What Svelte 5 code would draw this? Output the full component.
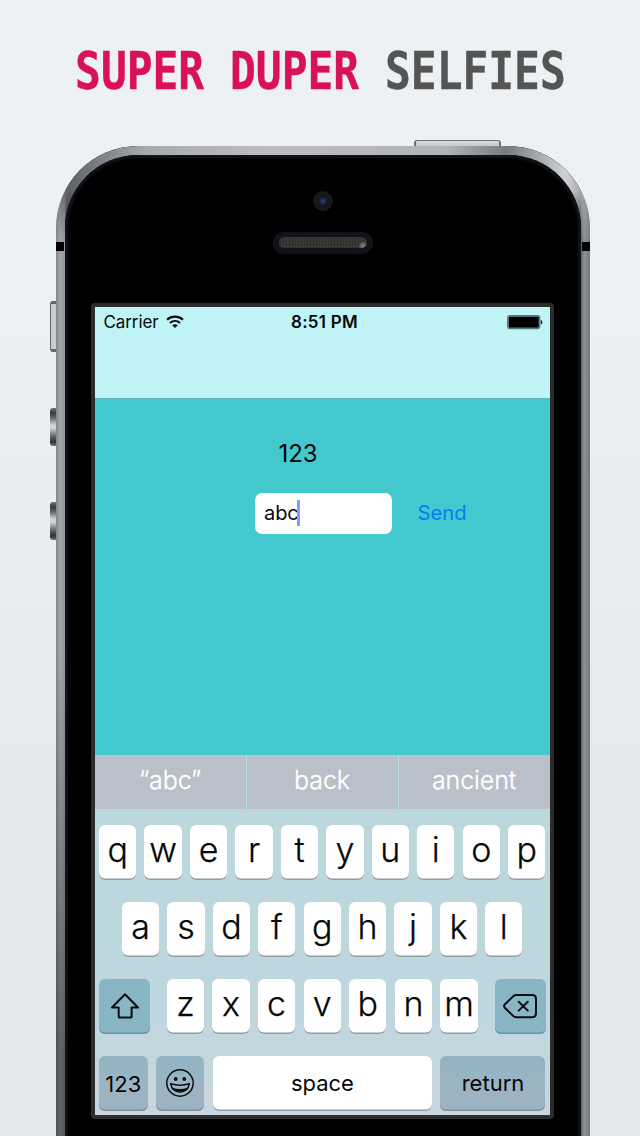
<script>
  const top = 'qwertyuiop'.split('');
  const home = 'asdfghjkl'.split('');
  const bottom = 'zxcvbnm'.split('');
  const suggestions = ['“abc”', 'back', 'ancient'];
</script>

<main class="page">
  <h1><span class="title"><span class="accent">SUPER DUPER</span> SELFIES</span></h1>

  <div class="phone">
    <i class="power"></i>
    <i class="side mute"></i>
    <i class="side volume up"></i>
    <i class="side volume down"></i>
    <i class="band left"></i>
    <i class="band right"></i>

    <div class="face">
      <div class="camera"><i></i></div>
      <div class="speaker"><i></i></div>

      <div class="screen">
        <header>
          <div class="status">
            <span class="carrier">
              <span class="carrier-name">Carrier</span>
              <svg width="18" height="14" viewBox="0 0 18 14" fill="none" stroke="#061012" stroke-width="2.1">
                <path d="M1 4.7C5.7.6 12.3.6 17 4.7" />
                <path d="M3.9 8C6.9 5.3 11.1 5.3 14.1 8" />
                <path d="M6.2 10.3C7.8 8.9 10.2 8.9 11.8 10.3L9 13.1Z" fill="#061012" stroke="none" />
              </svg>
            </span>
            <strong>8:51 PM</strong>
            <svg class="battery" width="36" height="15" viewBox="0 0 36 15">
              <rect x=".7" y=".7" width="32" height="13" rx="2.4" fill="#c0f3f6" stroke="#53777a" stroke-width="1.3" />
              <rect x="1.6" y="1.6" width="30.2" height="11.2" rx="1.2" />
              <path d="M33.8 4.7q1.5.8 1.5 2.5t-1.5 2.5z" fill="#102325" />
            </svg>
          </div>
        </header>

        <section class="content">
          <div class="message"><span>123</span></div>
          <div class="compose">
            <div class="field"><span>abc</span><i></i></div>
            <span class="send"><span>Send</span></span>
          </div>
        </section>

        <div class="suggestions">
          {#each suggestions as word}
            <div><span>{word}</span></div>
          {/each}
        </div>

        <div class="keyboard">
          <div class="row">
            {#each top as letter}<div class="key">{letter}</div>{/each}
          </div>
          <div class="row home">
            {#each home as letter}<div class="key">{letter}</div>{/each}
          </div>
          <div class="row spread">
            <div class="key control">
              <svg width="30" height="28" viewBox="0 0 30 28" fill="none" stroke="#090e10" stroke-width="2" stroke-linejoin="round">
                <path d="M15 2.2 28 15.5H21.6V24.7Q21.6 25.6 20.7 25.6H9.6Q8.7 25.6 8.7 24.7V15.5H2Z" />
              </svg>
            </div>
            <div class="letters">
              {#each bottom as letter}<div class="key">{letter}</div>{/each}
            </div>
            <div class="key control">
              <svg width="36" height="28" viewBox="0 0 36 28" fill="none" stroke="#090e10" stroke-width="2" stroke-linejoin="round" stroke-linecap="round">
                <path d="M14 3H30Q34 3 34 7V21.2Q34 25.2 30 25.2H14Q12.5 25.2 11.4 24.1L2.8 15.7Q1.4 14.1 2.8 12.5L11.4 4.1Q12.5 3 14 3Z" />
                <path d="m16.7 9.7 9.1 8.9m0-8.9-9.1 8.9" />
              </svg>
            </div>
          </div>
          <div class="row functions">
            <div class="key dim num"><span>123</span></div>
            <div class="key dim">
              <svg width="30" height="30" viewBox="0 0 30 30" fill="none" stroke="#090e10" stroke-width="1.5">
                <circle cx="15" cy="15" r="13.2" />
                <circle cx="10.7" cy="11" r="1.9" fill="#090e10" stroke="none" />
                <circle cx="19.3" cy="11" r="1.9" fill="#090e10" stroke="none" />
                <path d="M5.8 15.7Q15 18.6 24.2 15.7 23.2 23.9 15 23.9 6.8 23.9 5.8 15.7Z" />
                <path d="M7.4 19.7Q15 22.3 22.6 19.7 20.2 23.9 15 23.9 9.8 23.9 7.4 19.7Z" fill="#090e10" stroke="none" />
              </svg>
            </div>
            <div class="key space"><span>space</span></div>
            <div class="key dim return"><span>return</span></div>
          </div>
        </div>
      </div>
    </div>
  </div>
</main>

<style>
  :global(body) { margin: 0; background: #e8edf0; }
  * { box-sizing: border-box; }
  i { display: block; }
  svg { display: block; flex: none; }
  .page {
    width: 640px;
    height: 1136px;
    overflow: hidden;
    background: linear-gradient(#edf1f4, #ebf0f2 30%, #e4eaee 65%, #e3e9ed);
    font-family: Inter, "Liberation Sans", sans-serif;
    color: #050808;
  }
  h1 {
    display: flex;
    justify-content: center;
    align-items: center;
    height: 146px;
    padding-bottom: 5px;
    margin: 0;
    font: bold 52px/60px "DejaVu Sans Mono", monospace;
    color: #545454;
    white-space: pre;
    -webkit-text-stroke: .4px;
  }
  .title { flex: none; transform: scaleX(.825); }
  .accent { color: #d81159; }
  .phone {
    position: relative;
    width: 534px;
    height: 1100px;
    margin-left: 56px;
    padding: 9px 9px 0;
    border-radius: 82px 82px 0 0;
    background:
      linear-gradient(#0000 500px, #0006 900px) 0 0 / 9px 100% no-repeat,
      linear-gradient(90deg, #85868b 0, #a4a5aa 4px, #96979d 9px, #222 10px, #222 524px, #5b5c62 525px, #919297 528px, #77787d 534px);
  }
  .phone::before {
    content: "";
    position: absolute;
    inset: 0 0 auto;
    height: 96px;
    border-radius: 82px 82px 0 0;
    background: linear-gradient(90deg, #75777c 2px, #606268 14px, #85868b 50px, #a8a9ae 90px, #bdbdc0 210px, #b2b3b6 390px, #7a7b80 450px, #d0d1d4 510px, #909196);
    mask-image: linear-gradient(#000 45px, transparent);
  }
  .face {
    position: relative;
    display: flex;
    flex-direction: column;
    align-items: center;
    height: 100%;
    border-radius: 73px 73px 0 0;
    background: #000;
    box-shadow: inset 0 0 2px 3px #11141c;
  }
  .camera {
    display: grid;
    place-items: center;
    width: 20px;
    height: 20px;
    margin-top: 36px;
    border-radius: 50%;
    background: #17181a;
  }
  .camera i {
    width: 8px;
    height: 8px;
    border-radius: 50%;
    background: radial-gradient(#2a438c, #152041 60%, #101622);
  }
  .speaker {
    width: 100px;
    height: 22px;
    margin-top: 21px;
    padding: 5px 6px;
    border-radius: 11px;
    background: #11131a;
  }
  .speaker i {
    height: 11px;
    border-radius: 6px;
    background:
      radial-gradient(circle at 84px 9px, #77787b 1px, transparent 5px),
      radial-gradient(circle, #202020 .7px, transparent 1px) 0 0 / 3px 3px,
      #383836;
  }
  .power, .side, .band { position: absolute; }
  .power {
    top: -6px;
    left: 358px;
    width: 87px;
    height: 6px;
    border: solid #707175;
    border-width: 1.5px 2.5px 0;
    border-radius: 3px 3px 0 0;
    background: linear-gradient(#dadcde, #c8c9cc);
  }
  .side { left: -6px; width: 6px; }
  .mute {
    top: 155px;
    height: 51px;
    border: solid #66676c;
    border-width: 3px 0 3px 1.5px;
    border-radius: 3px 0 0 3px;
    background: #c9cbd0;
  }
  .volume {
    height: 38px;
    border-radius: 3px 0 0 3px;
    background: linear-gradient(#75767a, #393a40 5px, #66676d 10px, #d4d5d8 17px, #d4d5d8 20px, #66676d 28px, #303138 34px, #75767a);
  }
  .up { top: 262px; }
  .down { top: 356px; }
  .band { top: 96px; width: 8px; height: 9px; background: #000; }
  .left { left: 0; }
  .right { right: 0; }
  .screen {
    display: flex;
    flex-direction: column;
    width: 463px;
    height: 816px;
    margin: 49px 2px 0 0;
    border: 4px solid #2c2c2c;
    border-radius: 4px;
    background: #42c8cd;
  }
  header { height: 92px; border-bottom: 1px solid #5fb8bd; background: #bff3f6; }
  .status {
    display: grid;
    grid-template-columns: 1fr auto 1fr;
    align-items: center;
    height: 30px;
    padding: 0 7px 0 9px;
    font-size: 17px;
  }
  .carrier { display: flex; align-items: center; gap: 8px; }
  .carrier-name { width: 54px; white-space: nowrap; letter-spacing: -.1px; }
  .status strong { font-size: 17px; font-weight: 600; letter-spacing: .25px; margin-left: 3px; }
  .battery { justify-self: end; }
  .content { height: 356px; padding-top: 39px; }
  .message { height: 32px; padding-left: 184px; font-size: 24px; line-height: 32px; letter-spacing: -.1px; }
  .compose { display: flex; align-items: center; margin-top: 23px; padding-left: 160px; }
  .field {
    display: flex;
    align-items: center;
    width: 137px;
    height: 41px;
    padding: 0 0 1px 9.5px;
    border-radius: 7px;
    background: #fff;
    font-size: 20px;
    letter-spacing: -.1px;
  }
  .field i { width: 2.5px; height: 26px; background: #829cf9; margin: 0 0 0 -1.5px; }
  .send { margin-left: 26px; padding-bottom: 2px; font-size: 20.3px; color: #087bf5; }
  .suggestions {
    display: grid;
    grid-template-columns: 151px 151px 1fr;
    gap: 1px;
    height: 54px;
    background: #b8dfe5;
  }
  .suggestions div {
    display: grid;
    place-items: center;
    padding-bottom: 5px;
    background: #b9c0ca;
    color: #fff;
    font-size: 25px;
    font-weight: 350;
    letter-spacing: -.1px;
    -webkit-text-stroke: .3px;
  }
  .keyboard {
    display: flex;
    flex-direction: column;
    gap: 22px;
    flex: 1;
    padding: 16px 4px 0 4.5px;
    background: linear-gradient(#bdd7de 0, #bed7de 55%, #c3d6de 80%, #c9d5df);
  }
  .row { display: flex; justify-content: space-between; height: 55px; }
  .home { padding: 0 23px; }
  .letters { display: flex; justify-content: space-between; width: 311px; }
  .key {
    display: flex;
    justify-content: center;
    align-items: center;
    width: 37.3px;
    height: 55px;
    padding-bottom: 5px;
    border-radius: 6px;
    background: #fff;
    box-shadow: inset 0 -1.5px #929da2;
    font-size: 34px;
    font-weight: 350;
    line-height: 1;
    -webkit-text-stroke: .25px;
  }
  .control { width: 51px; padding: 0 0 1px; background: #88b6c5; box-shadow: inset 0 -1.5px #6e929d; }
  .functions .key { padding: 0 0 2px; font-size: 22px; font-weight: 400; -webkit-text-stroke: 0; }
  .functions .dim { width: 48.5px; background: linear-gradient(#91b4c2, #9eb4c2 60%, #9cb2c0); box-shadow: inset 0 -1.5px #7d929c; }
  .functions .num { padding: 0; }
  .functions .space { width: 219.5px; }
  .functions .return { width: 105px; }
</style>
